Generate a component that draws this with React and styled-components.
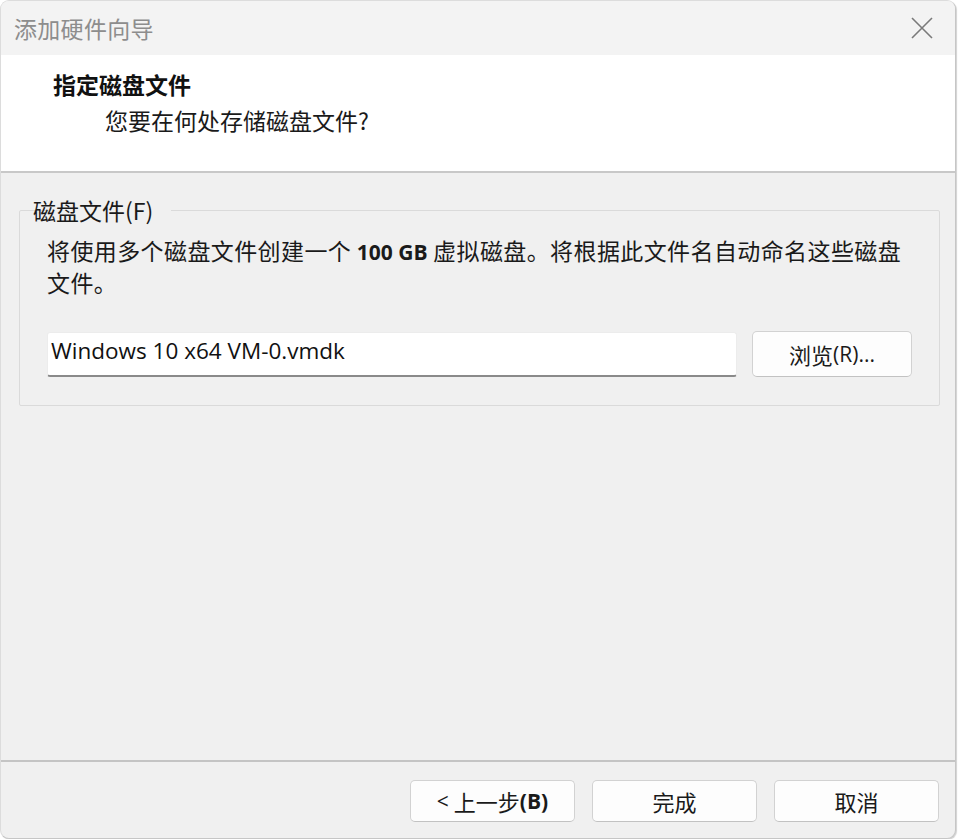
import styled, { createGlobalStyle } from "styled-components";

const GlobalStyle = createGlobalStyle`
  html, body {
    margin: 0;
    padding: 0;
    background: #ffffff;
  }
  body {
    font-family: "Noto Sans CJK SC", "Noto Sans", sans-serif;
  }
`;

const Window = styled.div`
  width: 956px;
  height: 839px;
  box-sizing: border-box;
  display: flex;
  flex-direction: column;
  background: #f0f0f0;
  border: 1px solid #c6c6c6;
  border-top-color: #dcdcdc;
  border-left-color: #dcdcdc;
  border-radius: 9px;
  overflow: hidden;
  box-shadow: 1px 1px 1px rgba(0, 0, 0, 0.18);
`;

const TitleBar = styled.div`
  height: 54px;
  flex: none;
  display: flex;
  align-items: center;
  justify-content: space-between;
  padding: 0 20px 0 13px;
  background: #f3f3f3;
`;

const TitleText = styled.span`
  font-size: 23px;
  color: #8d8d8d;
  letter-spacing: 0.3px;
`;

const CloseButton = styled.button`
  width: 26px;
  height: 26px;
  padding: 0;
  border: none;
  background: transparent;
  display: flex;
  align-items: center;
  justify-content: center;
`;

const Header = styled.div`
  height: 118px;
  flex: none;
  box-sizing: border-box;
  background: #ffffff;
  border-bottom: 2px solid #c8c8c8;
  padding-top: 12px;
`;

const HeaderTitle = styled.div`
  padding-left: 52px;
  font-size: 23px;
  font-weight: 700;
  line-height: 34px;
  color: #111;
`;

const HeaderSub = styled.div`
  padding-left: 104px;
  font-size: 23px;
  line-height: 38px;
  color: #1a1a1a;
`;

const Body = styled.div`
  flex: 1;
  padding: 22px 19px 0 18px;
`;

const Group = styled.fieldset`
  margin: 0;
  padding: 10px 27px 28px 27px;
  border: 1px solid #dadada;
  border-radius: 2px;
`;

const Legend = styled.legend`
  margin-left: 0;
  padding: 0 2px;
  font-size: 23px;
  line-height: 30px;
  color: #1a1a1a;
  position: relative;
  left: -16px;
`;

const Description = styled.p`
  margin: 0;
  font-size: 23px;
  line-height: 30px;
  color: #1a1a1a;
  letter-spacing: 0.4px;

  b {
    font-family: "Open Sans", "Noto Sans", sans-serif;
    font-weight: 700;
    font-size: 21px;
    letter-spacing: 0;
  }
`;

const FileRow = styled.div`
  display: flex;
  align-items: center;
  gap: 15px;
  margin-top: 34px;
`;

const FileInput = styled.input`
  width: 690px;
  height: 45px;
  box-sizing: border-box;
  padding: 0 3px 6px;
  border: 1px solid #ececec;
  border-bottom: 2px solid #8a8a8a;
  border-radius: 3px;
  background: #ffffff;
  font-family: "Open Sans", "Noto Sans", sans-serif;
  font-size: 22.5px;
  color: #111;
  outline: none;
`;

const Button = styled.button`
  width: ${(p) => p.$width || 165}px;
  height: ${(p) => p.$height || 42}px;
  box-sizing: border-box;
  border: 1px solid #d2d2d2;
  border-bottom-color: #c2c2c2;
  border-radius: 5px;
  background: #fdfdfd;
  font-family: "Open Sans", "Noto Sans CJK SC", sans-serif;
  font-size: 21px;
  color: #1a1a1a;
  display: flex;
  align-items: center;
  justify-content: center;
  padding: 0;

  span {
    font-family: "Noto Sans CJK SC", sans-serif;
    font-size: 22px;
  }
`;

const Footer = styled.div`
  height: 78px;
  flex: none;
  box-sizing: border-box;
  border-top: 2px solid #c4c4c4;
  display: flex;
  justify-content: flex-end;
  align-items: flex-start;
  gap: 17px;
  padding: 18px 16px 0 0;
`;

export default function App() {
  return (
    <>
      <GlobalStyle />
      <Window>
        <TitleBar>
          <TitleText>添加硬件向导</TitleText>
          <CloseButton aria-label="关闭">
            <svg width="22" height="22" viewBox="0 0 22 22">
              <path d="M1 1 L21 21 M21 1 L1 21" stroke="#7a7a7a" strokeWidth="1.6" />
            </svg>
          </CloseButton>
        </TitleBar>
        <Header>
          <HeaderTitle>指定磁盘文件</HeaderTitle>
          <HeaderSub>您要在何处存储磁盘文件?</HeaderSub>
        </Header>
        <Body>
          <Group>
            <Legend>磁盘文件(F)</Legend>
            <Description>
              将使用多个磁盘文件创建一个 <b>100 GB</b> 虚拟磁盘。将根据此文件名自动命名这些磁盘文件。
            </Description>
            <FileRow>
              <FileInput defaultValue="Windows 10 x64 VM-0.vmdk" />
              <Button $width={160} $height={46}>
                <span>浏览</span>(R)...
              </Button>
            </FileRow>
          </Group>
        </Body>
        <Footer>
          <Button>
            &lt;<span>&nbsp;上一步</span><b>(B)</b>
          </Button>
          <Button>
            <span>完成</span>
          </Button>
          <Button>
            <span>取消</span>
          </Button>
        </Footer>
      </Window>
    </>
  );
}
